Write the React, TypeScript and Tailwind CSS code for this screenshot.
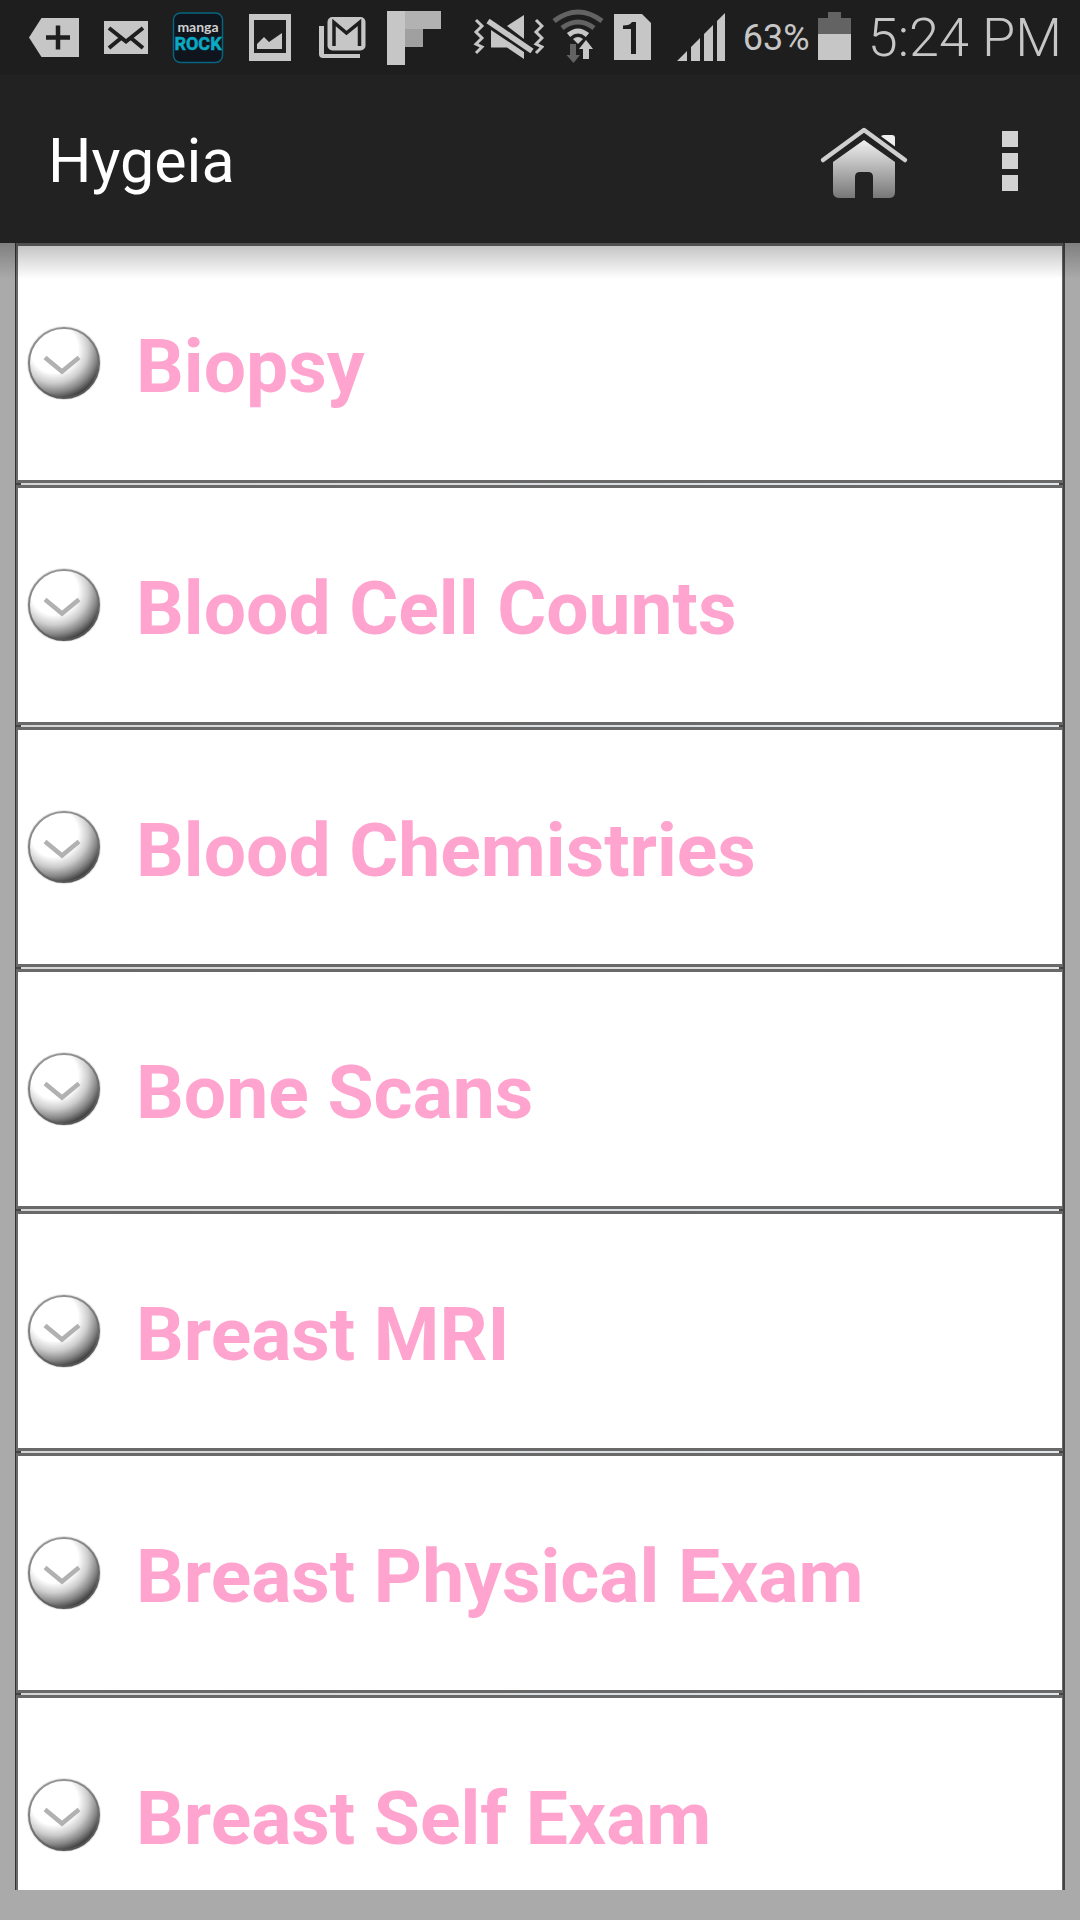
import type { ReactNode } from "react";

const topics = [
  "Biopsy",
  "Blood Cell Counts",
  "Blood Chemistries",
  "Bone Scans",
  "Breast MRI",
  "Breast Physical Exam",
  "Breast Self Exam",
];

function StatusIcon({ x, w, label, children }: { x: number; w: number; label: string; children: ReactNode }) {
  return (
    <svg role="img" aria-label={label} width={w} height={75} viewBox={`${x} 0 ${w} 75`} className="shrink-0" fill="#c6c6c6">
      {children}
    </svg>
  );
}

function StatusBar() {
  return (
    <div className="flex h-[75px] shrink-0 items-center justify-between bg-[#1e1e1e] pr-[18px] pl-[27px] text-[#c6c6c6]">
      <div className="flex items-center gap-5">
        <StatusIcon x={27} w={54} label="Add">
          <path d="M29 37.5 41.5 18H79v39H41.5z" />
          <path d="M46 37.5h24M58 25.500v24" stroke="#1e1e1e" strokeWidth="4.500" fill="none" />
        </StatusIcon>
        <StatusIcon x={101} w={50} label="Mail">
          <path d="M104 21h44v33h-44z" />
          <path d="M109 28l17 13.500 17-13.500M109 48l11.500-9.500M143 48l-11.500-9.500" stroke="#1e1e1e" strokeWidth="4" fill="none" />
        </StatusIcon>
        <StatusIcon x={171} w={54} label="Manga Rock">
          <rect x="173.500" y="13" width="49" height="49.500" rx="7" fill="#10141c" stroke="#076480" strokeWidth="1.500" />
          <text x="198" y="32" textAnchor="middle" fontSize="14" fontWeight="700" fill="#d0d0d0" className="font-['Lato',sans-serif]">manga</text>
          <text x="198" y="50" textAnchor="middle" fontSize="18" fontWeight="700" fill="#0aa9c4" stroke="#0aa9c4" strokeWidth="0.500" className="font-['Liberation_Sans_Narrow','Roboto',sans-serif]">ROCK</text>
        </StatusIcon>
        <StatusIcon x={245} w={51} label="Picture">
          <path fillRule="evenodd" d="M249 14h42v47h-42zM254 20v33h32V20z" />
          <path d="M257 49v-5l7-7 5 5 13-9v16z" />
        </StatusIcon>
        <StatusIcon x={316} w={51} label="Gmail">
          <rect x="327.500" y="17" width="38" height="33.500" rx="5" />
          <path d="M334 46V22.500L346.500 33 359.500 22.500V46" stroke="#1e1e1e" strokeWidth="3.500" fill="none" />
          <path d="M319 26h5v28h36v4h-37q-4 0-4-4z" />
        </StatusIcon>
        <StatusIcon x={387} w={54} label="Flipboard">
          <path d="M387 11h18v54h-18z" />
          <path d="M405 11h36v18h-36z" fill="#b2b2b2" />
          <path d="M405 29h18v18h-18z" fill="#a0a0a0" />
        </StatusIcon>
      </div>
      <div className="flex items-center gap-2 font-['Roboto',sans-serif]">
        <StatusIcon x={471} w={72} label="Vibrate">
          <path d="M475 20l6 6-6 6 6 6-6 6 6 3-6 6M535 20l6 6-6 6 6 6-6 6 6 3-6 6" stroke="#c6c6c6" strokeWidth="3" fill="none" />
          <path d="M506 26l17-11v24z" />
          <path d="M490 30v17.500h16L523 59V52z" />
          <path d="M486 19l46 33" stroke="#1e1e1e" strokeWidth="10" />
          <path d="M487 21l44 30" stroke="#c6c6c6" strokeWidth="5.500" />
        </StatusIcon>
        <StatusIcon x={551} w={52} label="Wi-Fi">
          <g fill="none" strokeWidth="5">
            <path d="M553 21q24-18 48 0" stroke="#636363" />
            <path d="M561 28q16-12 32 0" stroke="#636363" />
            <path d="M567.500 35q9.500-8 19 0" stroke="#c6c6c6" />
          </g>
          <path d="M572 39q5-4 10 0l-5 5z" />
          <path d="M569 44h6v11h4l-6.500 8-7-8h3.500z" fill="#636363" />
          <path d="M582 59h6V49h4l-7-9-7 9h4z" />
        </StatusIcon>
        <StatusIcon x={611} w={41} label="SIM 1">
          <path d="M613 14h28l9 9v37h-37z" />
          <path d="M630 54V29h-8v-3.500q7 0 9-3.500h4v32z" fill="#1e1e1e" />
        </StatusIcon>
        <StatusIcon x={660} w={74} label="Signal">
          <path d="M676 61l10-10v10zM690 61V47l9-9v23zM703 61V34l9-9v36zM716 61V21l8-8v48z" />
        </StatusIcon>
        <span className="text-[36px] leading-none">63%</span>
        <StatusIcon x={817} w={34} label="Battery">
          <path d="M817 18h10v-6h13v6h10v16h-33z" fill="#636363" />
          <path d="M817 34h33v26h-33z" />
        </StatusIcon>
        <time className="pl-2 text-[54px] leading-none font-[350]">5:24 PM</time>
      </div>
    </div>
  );
}

function HomeIcon() {
  return (
    <svg width="96" height="80" viewBox="816 122 96 80" aria-hidden="true">
      <defs>
        <linearGradient id="house" x1="0" y1="0" x2="0" y2="1">
          <stop offset="0" stopColor="#f0f0f0" />
          <stop offset="1" stopColor="#777" />
        </linearGradient>
      </defs>
      <path d="M881 138q0-2 3-2h8q3 0 3 3v12l-14-10z" fill="#eee" />
      <path d="M864 141l31 22v30q0 6-6 6h-16v-21q0-5-5-5h-8q-5 0-5 5v21h-15q-7 0-7-6v-30z" fill="url(#house)" />
      <path d="M823 161l41-30 41 30" fill="none" stroke="#222" strokeWidth="10" strokeLinejoin="round" />
      <path d="M823 161l41-30 41 30" fill="none" stroke="#d0d0d0" strokeWidth="4.500" strokeLinejoin="round" strokeLinecap="round" />
    </svg>
  );
}

function AppBar() {
  return (
    <header className="flex h-[168px] shrink-0 items-center bg-[#222] pr-[54px] pl-12 text-white">
      <h1 className="flex-1 pt-1 text-[61px] leading-none">Hygeia</h1>
      <button type="button" aria-label="Home" className="pt-1">
        <HomeIcon />
      </button>
      <button type="button" aria-label="More options" className="ml-[82px] flex w-8 flex-col items-center gap-1.5 pt-1">
        <span className="size-4 bg-[#d3d3d3]" />
        <span className="size-4 bg-[#d3d3d3]" />
        <span className="size-4 bg-[#d3d3d3]" />
      </button>
    </header>
  );
}

function ExpandIcon() {
  return (
    <svg width="76" height="76" viewBox="0 0 76 76" className="shrink-0" aria-hidden="true">
      <circle cx="38" cy="38" r="37" fill="#bbb" opacity="0.4" />
      <circle cx="38" cy="38" r="35" fill="url(#sphere)" stroke="url(#rim)" strokeWidth="2" />
      <path d="M19 32.500l17 14 17-14" fill="none" stroke="#b1b1b1" strokeWidth="4.500" />
    </svg>
  );
}

function TopicList() {
  return (
    <main className="relative min-h-0 flex-1 overflow-hidden px-[15px]">
      <svg width="0" height="0" className="absolute" aria-hidden="true">
        <defs>
          <radialGradient id="sphere" cx="0.36" cy="0.3" r="0.74">
            <stop offset="0" stopColor="#fff" />
            <stop offset="0.46" stopColor="#fff" />
            <stop offset="0.66" stopColor="#ccc" />
            <stop offset="0.84" stopColor="#848484" />
            <stop offset="1" stopColor="#333" />
          </radialGradient>
          <linearGradient id="rim" x1="0.2" y1="0" x2="0.6" y2="1">
            <stop offset="0" stopColor="#999" />
            <stop offset="1" stopColor="#555" />
          </linearGradient>
        </defs>
      </svg>
      <ul className="flex flex-col gap-0.5 border-r-2 border-l border-r-[#444] border-l-[#333] bg-[linear-gradient(to_right,#444_5px,#d4d5d7_5px,#e2e6e8_calc(100%-4px),#444_calc(100%-4px))]">
        {topics.map((topic) => (
          <li key={topic}>
            <button
              type="button"
              className="flex h-60 w-full items-center border-y-3 border-r border-l-2 border-[#696969] bg-white pl-2 text-left"
            >
              <ExpandIcon />
              <span className="pt-1.5 pl-[34px] text-[75px] leading-none font-bold text-[#ffa3cf]">{topic}</span>
            </button>
          </li>
        ))}
      </ul>
      <div className="pointer-events-none absolute inset-x-0 top-0 h-9 bg-linear-to-b from-black/25 to-transparent" />
    </main>
  );
}

export default function App() {
  return (
    <div className="flex h-screen flex-col bg-[#aaa] font-['Roboto',sans-serif]">
      <StatusBar />
      <AppBar />
      <TopicList />
      <div className="h-[30px] shrink-0" />
    </div>
  );
}
